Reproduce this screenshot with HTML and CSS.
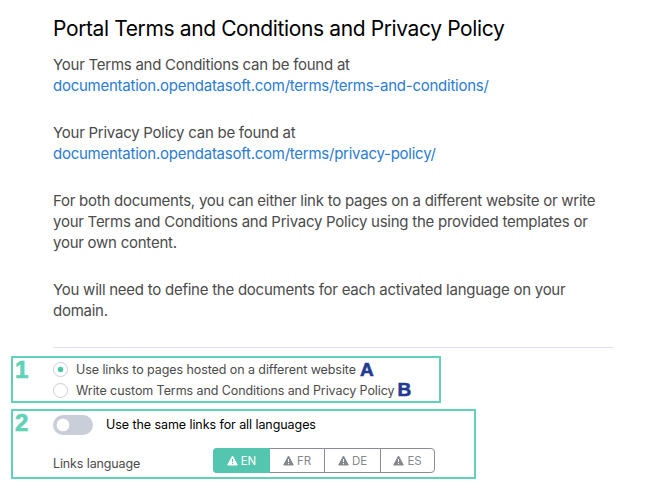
FILE: index.html
```html
<!DOCTYPE html>
<html lang="en"><head><meta charset="utf-8"><title>Portal Terms and Conditions</title><link rel="stylesheet" href="styles.css"></head>
<body><main>
<h1>Portal Terms and Conditions and Privacy Policy</h1>
<p>Your Terms and Conditions can be found at<br><a href="#">documentation.opendatasoft.com/terms/terms-and-conditions/</a></p>
<p>Your Privacy Policy can be found at<br><a href="#">documentation.opendatasoft.com/terms/privacy-policy/</a></p>
<p>For both documents, you can either link to pages on a different website or write<br>your Terms and Conditions and Privacy Policy using the provided templates or<br>your own content.</p>
<p>You will need to define the documents for each activated language on your<br>domain.</p>
<hr>
<section class="box one"><b class="num">1</b><div class="choices">
<div class="choice"><i class="radio on"></i><span>Use links to pages hosted on a different website</span><b class="tag tag-a">A</b></div>
<div class="choice"><i class="radio"></i><span>Write custom Terms and Conditions and Privacy Policy</span><b class="tag">B</b></div></div></section>
<section class="box two"><b class="num">2</b><div class="switchrow"><i class="switch"></i><span>Use the same links for all languages</span></div>
<div class="langrow"><span class="label">Links language</span><div class="tabs">
<span class="tab active"><svg viewBox="0 0 11 11"><path class="tri" d="M5.5 1 10.3 10H.7Z"/><path class="mark" d="M5.5 4v3M5.5 8v1.2"/></svg>EN</span>
<span class="tab"><svg viewBox="0 0 11 11"><path class="tri" d="M5.5 1 10.3 10H.7Z"/><path class="mark" d="M5.5 4v3M5.5 8v1.2"/></svg>FR</span>
<span class="tab"><svg viewBox="0 0 11 11"><path class="tri" d="M5.5 1 10.3 10H.7Z"/><path class="mark" d="M5.5 4v3M5.5 8v1.2"/></svg>DE</span>
<span class="tab"><svg viewBox="0 0 11 11"><path class="tri" d="M5.5 1 10.3 10H.7Z"/><path class="mark" d="M5.5 4v3M5.5 8v1.2"/></svg>ES</span>
</div></div></section>
</main></body></html>
```
FILE: styles.css
```css
*{box-sizing:border-box}
body{margin:0;background:#fff;color:#4b4b4b;font:15px/21px Inter,sans-serif}
main{padding:14px 0 0 11px;width:662px}
h1{margin:0 0 10px 42px;font-size:21px;line-height:30px;font-weight:400;color:#000;white-space:nowrap;letter-spacing:-.38px}
p{margin:0 0 26px 42px;white-space:nowrap;letter-spacing:-.25px}
a{color:#2c7cd3;text-decoration:none}
hr{border:0;border-top:1px solid #dee1ea;margin:0 0 8px 42px;width:560px}
.box{border:2px solid #61d2b8;display:grid;grid-template-columns:40px 1fr}
.one{width:430px;height:47px;margin-bottom:6px}
.two{width:465px;height:70px;grid-template-rows:28px 1fr}
.num{font:bold 24px/24px "Liberation Sans",sans-serif;color:#61d2b8;-webkit-text-stroke:.7px #61d2b8;padding-left:2px}
.choices{padding-top:1px}
.choice{display:flex;align-items:center;height:21px;font-size:12.5px;white-space:nowrap;letter-spacing:-.08px}
.radio{width:15px;height:15px;border:1px solid #c9ced8;border-radius:50%;margin-right:8px}
.on{background:radial-gradient(circle,#50c4a9 0 2.5px,#fff 3.2px)}
.tag{font:bold 19px/20px "Liberation Sans",sans-serif;color:#213b91;-webkit-text-stroke:.6px #213b91;margin:-1px 0 0 3px}
.tag-a{margin:1px 0 0 4px}
.switchrow{display:flex;align-items:center;height:28px;color:#000;font-size:12.5px;letter-spacing:-.07px}
.switchrow span{margin-top:-1px}
.switch{width:40px;height:20px;border-radius:10px;background:radial-gradient(circle at 10px 10px,#fff 0 6px,transparent 6.7px),#c9ced8;margin-right:13px}
.langrow{grid-column:2;display:flex;align-items:flex-start;font-size:12.5px;padding-top:9px}
.label{width:160px;padding-top:5px;letter-spacing:-.12px}
.tabs{display:flex;height:25px;border:1px solid #898c92;border-radius:4px}
.tab{width:54px;display:flex;align-items:center;justify-content:center;gap:3px;border-left:1px solid #898c92;font-size:11.5px;color:#85888e;padding-top:2px;letter-spacing:-.1px}
.tab:nth-child(3){width:56px}
.tab.active{width:57px;margin:-1px 0 -1px -1px;background:#54c5ae;color:#fff;border:0;border-radius:4px 0 0 4px}
.tab.active+.tab{border-left:0}
svg{width:11px;height:11px;margin-top:-2px}
.tri{fill:currentColor;stroke:currentColor;stroke-linejoin:round}
.mark{stroke:#fff;stroke-width:1}
.active .mark{stroke:#50c4a9}
```
